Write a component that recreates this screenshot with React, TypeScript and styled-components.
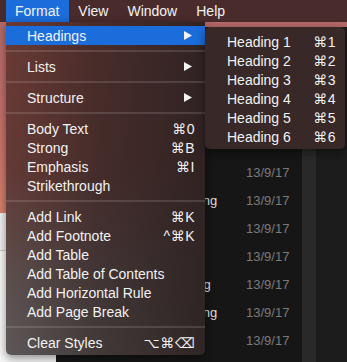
import styled, { createGlobalStyle } from "styled-components"

const GlobalStyle = createGlobalStyle`
  html, body {
    margin: 0;
    padding: 0;
    background: #1c1a1a;
  }
  body {
    font-family: "Liberation Sans", "DejaVu Sans", Arial, sans-serif;
    -webkit-font-smoothing: antialiased;
  }
`

type Entry =
  | { kind: "item"; label: string; shortcut?: string; submenu?: boolean; active?: boolean }
  | { kind: "sep" }

const formatMenu: Entry[] = [
  { kind: "item", label: "Headings", submenu: true, active: true },
  { kind: "sep" },
  { kind: "item", label: "Lists", submenu: true },
  { kind: "sep" },
  { kind: "item", label: "Structure", submenu: true },
  { kind: "sep" },
  { kind: "item", label: "Body Text", shortcut: "⌘0" },
  { kind: "item", label: "Strong", shortcut: "⌘B" },
  { kind: "item", label: "Emphasis", shortcut: "⌘I" },
  { kind: "item", label: "Strikethrough" },
  { kind: "sep" },
  { kind: "item", label: "Add Link", shortcut: "⌘K" },
  { kind: "item", label: "Add Footnote", shortcut: "^⌘K" },
  { kind: "item", label: "Add Table" },
  { kind: "item", label: "Add Table of Contents" },
  { kind: "item", label: "Add Horizontal Rule" },
  { kind: "item", label: "Add Page Break" },
  { kind: "sep" },
  { kind: "item", label: "Clear Styles", shortcut: "⌥⌘⌫" }
]

const headings = [1, 2, 3, 4, 5, 6]

// visible rows of the note list behind the menu
const notes = ["Misc", "Testing", "Draft", "Misc", "Going", "Testing", "Draft"]

function Arrow() {
  return (
    <svg width="8" height="9" viewBox="0 0 8 9">
      <polygon points="0,0 8,4.5 0,9" fill="#f4f4f4" />
    </svg>
  )
}

function App() {
  return (
    <Screen>
      <GlobalStyle />
      <MenuBar>
        <MenuTitle $active>Format</MenuTitle>
        <MenuTitle>View</MenuTitle>
        <MenuTitle>Window</MenuTitle>
        <MenuTitle>Help</MenuTitle>
      </MenuBar>

      <Desktop>
        <Sidebar>
          <SidebarTop />
          <SidebarPanel />
          <SidebarRest />
        </Sidebar>
        <AppMain>
          <TitleStrip />
          <AppBody>
            <NoteList>
              {notes.map((title, idx) => (
                <NoteRow key={`note-${idx}`}>
                  <NoteTitle>{title}</NoteTitle>
                  <NoteDate>13/9/17</NoteDate>
                </NoteRow>
              ))}
            </NoteList>
            <ScrollTrack />
            <Editor />
          </AppBody>
        </AppMain>
      </Desktop>

      <Dropdown>
        {formatMenu.map((entry, idx) =>
          entry.kind === "sep" ? (
            <Separator key={`sep-${idx}`} />
          ) : (
            <Item key={entry.label} $active={entry.active}>
              <span>{entry.label}</span>
              {entry.submenu ? <Arrow /> : entry.shortcut && <Shortcut>{entry.shortcut}</Shortcut>}
            </Item>
          )
        )}
      </Dropdown>

      <Submenu>
        {headings.map((n) => (
          <SubItem key={`h-${n}`}>
            <span>Heading {n}</span>
            <Shortcut>⌘{n}</Shortcut>
          </SubItem>
        ))}
      </Submenu>
    </Screen>
  )
}

const Screen = styled.div`
  position: relative;
  width: 347px;
  height: 362px;
  overflow: hidden;
  display: flex;
  flex-direction: column;
  color: #f2f2f2;
  font-size: 14px;
`

const MenuBar = styled.div`
  height: 22px;
  flex: none;
  display: flex;
  padding-left: 6px;
  background: #4a2b2c;
`

const MenuTitle = styled.div<{ $active?: boolean }>`
  padding: 0 10px 0 9px;
  line-height: 22px;
  color: #f3f3f3;
  background: ${(p) => (p.$active ? "#1b6ddb" : "transparent")};
`

const Desktop = styled.div`
  flex: 1;
  display: flex;
  min-height: 0;
`

const Sidebar = styled.div`
  width: 56px;
  flex: none;
  display: flex;
  flex-direction: column;
`

const SidebarTop = styled.div`
  height: 191px;
  background: linear-gradient(to bottom, #b46a6a 0%, #c8736a 60%, #d8806c 100%);
`

const SidebarPanel = styled.div`
  height: 37px;
  background: #f1efef;
  border-bottom: 1px solid #c8c8c8;
`

const SidebarRest = styled.div`
  flex: 1;
  background: #f7f7f7;
`

const AppMain = styled.div`
  flex: 1;
  display: flex;
  flex-direction: column;
`

const TitleStrip = styled.div`
  height: 5px;
  background: #b56a6a;
`

const AppBody = styled.div`
  flex: 1;
  display: flex;
`

const NoteList = styled.div`
  width: 246px;
  padding-top: 131px;
  background: #171616;
`

const NoteRow = styled.div`
  height: 28px;
  padding-left: 120px;
  display: grid;
  grid-template-columns: 70px auto;
  align-items: center;
  font-size: 13px;
`

const NoteTitle = styled.div`
  color: #dcdcdc;
  white-space: nowrap;
`

const NoteDate = styled.div`
  color: #7a7a7a;
`

const ScrollTrack = styled.div`
  width: 14px;
  background: #2a2929;
`

const Editor = styled.div`
  flex: 1;
  background: #1d1c1c;
`

const Dropdown = styled.div`
  position: absolute;
  left: 6px;
  top: 22px;
  width: 199px;
  padding: 4px 0 3px;
  border-radius: 0 0 5px 5px;
  background:
    linear-gradient(to right, rgba(44, 33, 33, 0) 0%, rgba(44, 33, 33, 0.55) 45%, rgba(44, 33, 33, 0.92) 100%),
    linear-gradient(to bottom, #6c3a35 0%, #643a36 45%, #5c4e4d 75%, #5e5858 100%);
  box-shadow: 0 3px 10px rgba(0, 0, 0, 0.45);
`

const Item = styled.div<{ $active?: boolean }>`
  height: 19px;
  display: flex;
  align-items: center;
  justify-content: space-between;
  padding: 0 13px 0 21px;
  background: ${(p) => (p.$active ? "#1b6ddb" : "transparent")};
  color: #f2f2f2;
  white-space: nowrap;
`

const Shortcut = styled.span`
  margin-right: -3px;
  letter-spacing: 0.5px;
`

const Separator = styled.div`
  height: 12px;
  display: flex;
  align-items: center;

  &::after {
    content: "";
    flex: 1;
    height: 2px;
    background: rgba(255, 255, 255, 0.13);
  }
`

const Submenu = styled.div`
  position: absolute;
  left: 205px;
  top: 27px;
  width: 140px;
  padding: 5px 0 3px;
  border-radius: 5px;
  background: #382828;
  box-shadow: 0 3px 10px rgba(0, 0, 0, 0.45);
`

const SubItem = styled.div`
  height: 19px;
  display: flex;
  align-items: center;
  justify-content: space-between;
  padding: 0 12px 0 22px;
  color: #f2f2f2;
`

export default App
